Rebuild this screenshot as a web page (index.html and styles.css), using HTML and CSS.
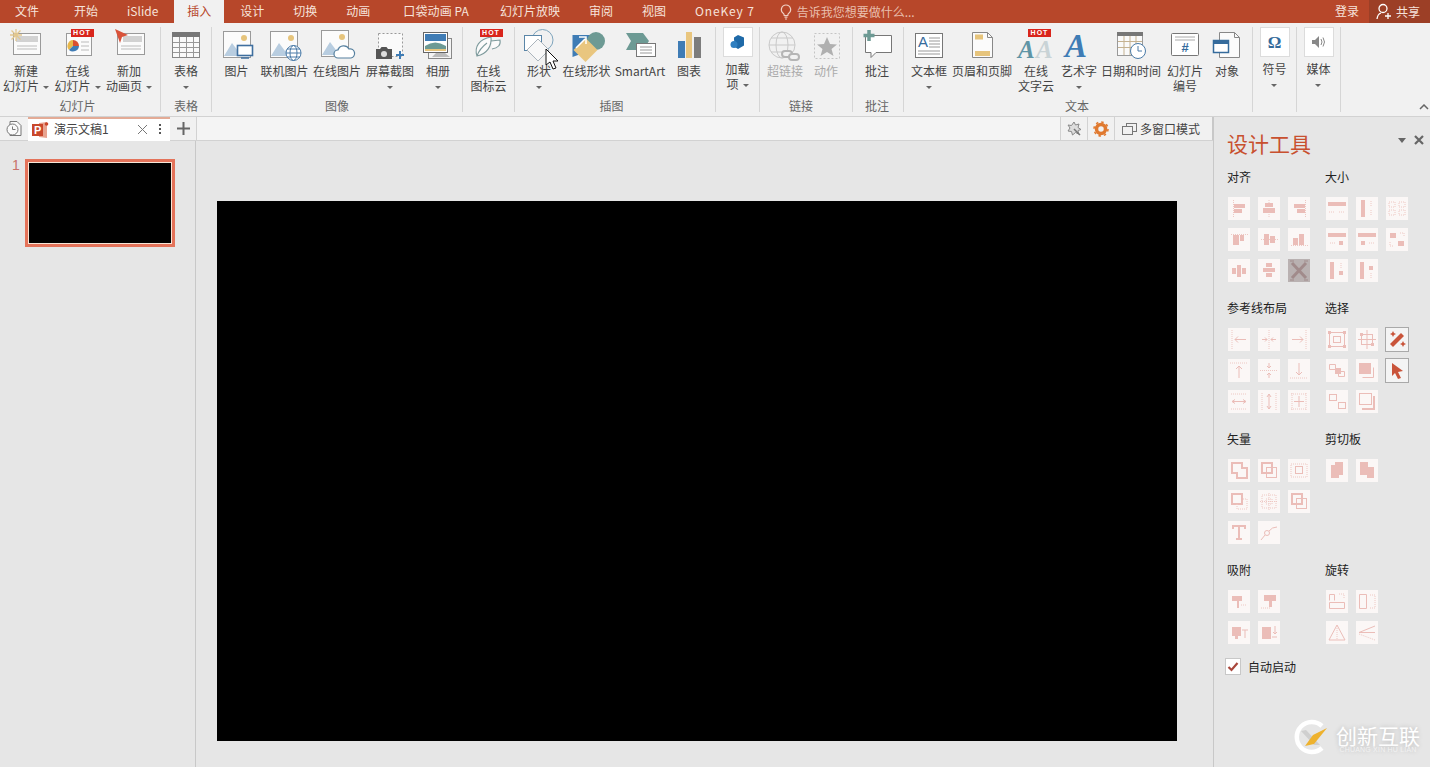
FILE: index.html
```html
<!DOCTYPE html>
<html lang="zh">
<head>
<meta charset="utf-8">
<title>演示文稿1</title>
<link rel="stylesheet" href="styles.css">
</head>
<body>
<div class="app">
  <header class="titlebar">
    <nav class="tabs">
      <span class="tab tab-first">文件</span>
      <span class="tab">开始</span>
      <span class="tab">iSlide</span>
      <span class="tab active">插入</span>
      <span class="tab">设计</span>
      <span class="tab">切换</span>
      <span class="tab">动画</span>
      <span class="tab tab-wide">口袋动画 PA</span>
      <span class="tab">幻灯片放映</span>
      <span class="tab">审阅</span>
      <span class="tab">视图</span>
      <span class="tab tab-key">OneKey 7</span>
    </nav>
    <div class="tellme">
      <svg width="12" height="16" viewBox="0 0 12 16"><path d="M6 1a4.6 4.6 0 0 0-2.6 8.4c.6.5.8 1.2.8 2.1h3.6c0-.9.2-1.6.8-2.1A4.6 4.6 0 0 0 6 1zM4.5 13.2h3M5 15h2" fill="none" stroke="#f0d0c4" stroke-width="1.2"/></svg>
      <span>告诉我您想要做什么...</span>
    </div>
    <span class="login">登录</span>
    <div class="share">
      <svg width="16" height="17" viewBox="0 0 16 17"><circle cx="7" cy="5.5" r="4" fill="none" stroke="#fff" stroke-width="1.3"/><path d="M1 16c.4-3.5 2.4-5.5 4-6M9 13h6M12 10v6" fill="none" stroke="#fff" stroke-width="1.3"/></svg>
      <span>共享</span>
    </div>
  </header>

  <section class="ribbon">
    <div class="group g-pad5">
      <div class="btns">
        <div class="btn w52"><div class="icon"><svg width="40" height="34" viewBox="0 0 40 34"><rect x="7.5" y="6.5" width="27" height="21" class="doc"/><rect x="10" y="9" width="22" height="6" fill="#d2d2d2"/><path d="M11 19h20M11 22h20" stroke="#bbb"/><g stroke="#e3c88e" stroke-width="1.3"><path d="M10 2v12M4 8h12M5.5 3.5l9 9M14.5 3.5l-9 9"/></g></svg></div><div class="label">新建<br>幻灯片<i class="caret inl"></i></div></div>
        <div class="btn w51"><div class="icon"><svg width="40" height="34" viewBox="0 0 40 34"><rect x="8.5" y="6.5" width="25" height="22" class="doc"/><path d="M15 19V13a6 6 0 0 1 6 6z" fill="#d94f30"/><path d="M15 13a6 6 0 0 0-4 10l4-4z" fill="#e8b84a"/><path d="M11 23a6 6 0 0 0 10-4h-6z" fill="#3f7cb5"/><path d="M23 15h8M23 19h8M23 23h8" stroke="#bbb"/></svg><span class="hot hot-a">HOT</span></div><div class="label">在线<br>幻灯片<i class="caret inl"></i></div></div>
        <div class="btn w52"><div class="icon"><svg width="40" height="34" viewBox="0 0 40 34"><rect x="8.5" y="6.5" width="27" height="21" class="doc"/><rect x="14" y="9" width="19" height="6" fill="#d2d2d2"/><path d="M12 19h20M12 22h20" stroke="#bbb"/><path d="M6 2l13 6-6 2-2 6z" fill="#d9533a"/></svg></div><div class="label">新加<br>动画页<i class="caret inl"></i></div></div>
      </div>
      <div class="group-name">幻灯片</div>
    </div>

    <div class="group">
      <div class="btns">
        <div class="btn w50"><div class="icon"><svg width="40" height="34" viewBox="0 0 40 34"><rect x="6.5" y="5.5" width="27" height="25" fill="#fafafa" stroke="#888"/><rect x="6" y="5" width="28" height="5" fill="#777"/><path d="M7 15.5h26M7 20.5h26M7 25.5h26M13.5 10v20M20.5 10v20M27.5 10v20" stroke="#999"/></svg></div><div class="label">表格<br><i class="caret"></i></div></div>
      </div>
      <div class="group-name">表格</div>
    </div>

    <div class="group">
      <div class="btns">
        <div class="btn w49"><div class="icon"><svg width="40" height="34" viewBox="0 0 40 34"><rect x="6.5" y="4.5" width="27" height="26" class="doc"/><path d="M7 29l8-13 6 8 3-3 6 8z" fill="#b8cde0"/><circle cx="27" cy="11" r="3" fill="#e6c47c"/><rect x="20.5" y="18.5" width="15" height="10" fill="#fff" stroke="#3f6f9f" stroke-width="1.6"/><path d="M24 31h8" stroke="#3f6f9f" stroke-width="1.5"/></svg></div><div class="label">图片</div></div>
        <div class="btn w47"><div class="icon"><svg width="40" height="34" viewBox="0 0 40 34"><rect x="5.5" y="4.5" width="27" height="26" class="doc"/><path d="M6 29l8-13 6 8 3-3 6 8z" fill="#b8cde0"/><circle cx="26" cy="11" r="3" fill="#e6c47c"/><circle cx="28.5" cy="26" r="7.5" fill="#fff" stroke="#4a7ba8"/><ellipse cx="28.5" cy="26" rx="3.5" ry="7.5" fill="none" stroke="#4a7ba8"/><path d="M21 26h15M22 22h13M22 30h13" stroke="#4a7ba8"/></svg></div><div class="label">联机图片</div></div>
        <div class="btn w58"><div class="icon"><svg width="40" height="34" viewBox="0 0 40 34"><rect x="4.5" y="3.5" width="27" height="26" class="doc"/><path d="M5 28l8-13 6 8 3-3 6 8z" fill="#b8cde0"/><circle cx="25" cy="10" r="3" fill="#e6c47c"/><path d="M21 31a4 4 0 0 1 0-8 6 6 0 0 1 11-1 4.5 4.5 0 0 1 2 9z" fill="#fff" stroke="#56809f" stroke-width="1.2"/></svg></div><div class="label">在线图片</div></div>
        <div class="btn w48"><div class="icon"><svg width="40" height="34" viewBox="0 0 40 34"><rect x="8.5" y="6.5" width="24" height="23" fill="#fafafa" stroke="#999" stroke-dasharray="2 2"/><path d="M6 22h4l1.5-2h5l1.5 2h4v10H6z" fill="#555"/><circle cx="14" cy="27" r="3" fill="#ddd"/><path d="M30 24v8M26 28h8" stroke="#3f7cb5" stroke-width="2"/></svg></div><div class="label">屏幕截图<br><i class="caret"></i></div></div>
        <div class="btn w48"><div class="icon"><svg width="40" height="34" viewBox="0 0 40 34"><rect x="10.5" y="11.5" width="23" height="20" fill="#f4f4f4" stroke="#888"/><path d="M14 30l8-8 10 8z" fill="#bbb"/><rect x="5.5" y="5.5" width="24" height="20" fill="#fff" stroke="#666"/><rect x="7" y="7" width="21" height="7" fill="#3f7cb5"/><path d="M7 19q10-7 21 0v3H7z" fill="#6d9a94"/><path d="M7 22h21v2H7z" fill="#e6c47c"/></svg></div><div class="label">相册<br><i class="caret"></i></div></div>
      </div>
      <div class="group-name">图像</div>
    </div>

    <div class="group">
      <div class="btns">
        <div class="btn w51"><div class="icon"><svg width="40" height="34" viewBox="0 0 40 34"><path d="M8 29c-3-9 2-17 14-19 1 9-4 17-14 19zM8 29c2-6 6-10 10-13M22 14l9-1c1 5-2 8-8 9" fill="#fbfbfb" stroke="#7d9a9c" stroke-width="1.1"/></svg><span class="hot hot-b">HOT</span></div><div class="label">在线<br>图标云</div></div>
      </div>
    </div>

    <div class="group g-pad7">
      <div class="btns">
        <div class="btn w48"><div class="icon"><svg width="40" height="34" viewBox="0 0 40 34"><circle cx="23.5" cy="13" r="10.5" fill="none" stroke="#7fa5bd"/><rect x="5.5" y="8.5" width="17" height="15" fill="#fff" stroke="#5a86a8"/><path d="M19 12l11 11-11 11L8 23z" fill="#f8f8f8" stroke="#aab4bc"/></svg><svg class="pointer" width="14" height="22" viewBox="0 0 14 22"><path d="M1 1v16l4-3 3 7 3-1-3-7h5z" fill="#fff" stroke="#111"/></svg></div><div class="label">形状<br><i class="caret"></i></div></div>
        <div class="btn w47"><div class="icon"><svg width="40" height="34" viewBox="0 0 40 34"><path d="M5.5 8h20v12L11 28l-5.500 2z" fill="#3f7cb5"/><circle cx="29" cy="14" r="9" fill="#6d9a94"/><path d="M18.5 11l12 12-12 12-12-12z" fill="#e9c67f"/><path d="M9 21l9-9M12 10h7v7" stroke="#fff" stroke-width="1.5" fill="none"/></svg></div><div class="label">在线形状</div></div>
        <div class="btn w60"><div class="icon"><svg width="40" height="34" viewBox="0 0 40 34"><path d="M6 6h17l6 8-6 9H6l5-9z" fill="#6d9a94"/><rect x="16.5" y="16.5" width="19" height="13" fill="#fff" stroke="#777"/><path d="M20 20h12M20 23h12M20 26h12" stroke="#999"/></svg></div><div class="label">SmartArt</div></div>
        <div class="btn w38"><div class="icon"><svg width="40" height="34" viewBox="0 0 40 34"><rect x="9" y="14" width="7" height="17" fill="#3f7cb5"/><rect x="17" y="5" width="6" height="26" fill="#e9c67f"/><rect x="25" y="10" width="7" height="21" fill="#7d7d7d"/></svg></div><div class="label">图表</div></div>
      </div>
      <div class="group-name">插图</div>
    </div>

    <div class="group">
      <div class="btns">
        <div class="btn w43"><div class="box"><svg width="18" height="16" viewBox="0 0 18 16"><path d="M9 1l6 2.5v8L9 15l-3-2V9L5 6V3.5z" fill="#1f6aa8"/><circle cx="5" cy="10.5" r="3.5" fill="#2f7fc0"/></svg></div><div class="label label-box">加载<br>项<i class="caret inl"></i></div></div>
      </div>
    </div>

    <div class="group g-pad10">
      <div class="btns">
        <div class="btn w50 off"><div class="icon"><svg width="40" height="34" viewBox="0 0 40 34"><g fill="none" stroke="#c9c9c9"><circle cx="17" cy="18" r="13"/><ellipse cx="17" cy="18" rx="6" ry="13"/><path d="M4 18h26M6 11h22M6 25h22"/></g><g fill="#f1f1f1" stroke="#b5b5b5" stroke-width="2"><rect x="17" y="24" width="10" height="6" rx="3"/><rect x="24" y="27" width="10" height="6" rx="3"/></g></svg></div><div class="label">超链接</div></div>
        <div class="btn w32 off"><div class="icon"><svg width="40" height="34" viewBox="0 0 40 34"><rect x="8.5" y="6.5" width="25" height="25" fill="none" stroke="#c4c4c4" stroke-dasharray="2 2"/><path d="M21 10l3 7 7 .5-5.500 4.500 2 7-6.500-4-6.500 4 2-7L11 17.500l7-.5z" fill="#b0b0b0"/></svg></div><div class="label">动作</div></div>
      </div>
      <div class="group-name">链接</div>
    </div>

    <div class="group g-pad2">
      <div class="btns">
        <div class="btn w48"><div class="icon"><svg width="40" height="34" viewBox="0 0 40 34"><path d="M8.5 8.5h26v17H19l-5 5v-5H8.5z" fill="#fff" stroke="#777"/><path d="M12 3v11M6.5 8.5h11" stroke="#6d9a94" stroke-width="3.5"/></svg></div><div class="label">批注</div></div>
      </div>
      <div class="group-name">批注</div>
    </div>

    <div class="group g-pad2">
      <div class="btns">
        <div class="btn w50"><div class="icon"><svg width="40" height="34" viewBox="0 0 40 34"><rect x="6.5" y="6.5" width="27" height="24" fill="#fff" stroke="#777"/><text x="9" y="20" class="svg-a">A</text><path d="M20 11h11M20 14h11M20 17h11M20 20h11M9 24h22M9 27h22" stroke="#999"/></svg></div><div class="label">文本框<br><i class="caret"></i></div></div>
        <div class="btn w56"><div class="icon"><svg width="40" height="34" viewBox="0 0 40 34"><path d="M10.5 5.5h15l5 5v20h-20z" fill="#fbfbfb" stroke="#888"/><path d="M25.5 5.5v5h5" fill="none" stroke="#888"/><rect x="13" y="7.5" width="8" height="5" fill="#e6c47c"/><rect x="13" y="24" width="15" height="5" fill="#e6c47c"/></svg></div><div class="label">页眉和页脚</div></div>
        <div class="btn w52"><div class="icon"><svg width="40" height="34" viewBox="0 0 40 34"><text x="2" y="31" class="svg-wa cloud-teal">A</text><text x="20" y="31" class="svg-wa cloud-grey">A</text></svg><span class="hot hot-c">HOT</span></div><div class="label">在线<br>文字云</div></div>
        <div class="btn w34"><div class="icon"><svg width="40" height="34" viewBox="0 0 40 34"><text x="6" y="30" class="svg-art">A</text></svg></div><div class="label">艺术字<br><i class="caret"></i></div></div>
        <div class="btn w70"><div class="icon"><svg width="40" height="34" viewBox="0 0 40 34"><rect x="6.5" y="5.5" width="25" height="23" fill="#fafafa" stroke="#999"/><rect x="6" y="5" width="26" height="4" fill="#777"/><path d="M7 14.5h24M7 20.5h24M13 9v19M19 9v19M25 9v19" stroke="#c5b291"/><circle cx="27" cy="24" r="7.5" fill="#fff" stroke="#4a7ba8"/><path d="M27 19v5h4" fill="none" stroke="#4a7ba8"/></svg></div><div class="label">日期和时间</div></div>
        <div class="btn w38"><div class="icon"><svg width="40" height="34" viewBox="0 0 40 34"><rect x="6.5" y="6.5" width="27" height="22" rx="1" fill="#fff" stroke="#777"/><path d="M10 10h20M10 13h20" stroke="#aaa"/><text x="20" y="25" class="svg-hash">#</text></svg></div><div class="label">幻灯片<br>编号</div></div>
        <div class="btn w46"><div class="icon"><svg width="40" height="34" viewBox="0 0 40 34"><path d="M12.5 5.5h15l5 5v20h-20z" fill="#fbfbfb" stroke="#888"/><path d="M27.5 5.5v5h5" fill="none" stroke="#888"/><rect x="6.5" y="13.5" width="15" height="12" fill="#fff" stroke="#356b9c" stroke-width="1.5"/><rect x="6" y="13" width="16" height="4" fill="#356b9c"/></svg></div><div class="label">对象</div></div>
      </div>
      <div class="group-name">文本</div>
    </div>

    <div class="group">
      <div class="btns">
        <div class="btn w43"><div class="box"><span class="omega">Ω</span></div><div class="label label-box">符号<br><i class="caret"></i></div></div>
      </div>
    </div>

    <div class="group">
      <div class="btns">
        <div class="btn w43"><div class="box"><svg width="14" height="12" viewBox="0 0 14 12"><path d="M0 4h3l4-4v12L3 8H0z" fill="#888"/><path d="M9 3q2 3 0 6M11 1.5q3 4.5 0 9" fill="none" stroke="#888"/></svg></div><div class="label label-box">媒体<br><i class="caret"></i></div></div>
      </div>
    </div>

    <svg class="collapse" width="10" height="6" viewBox="0 0 10 6"><path d="M1 5l4-4 4 4" fill="none" stroke="#666" stroke-width="1.5"/></svg>
  </section>

  <div class="body">
    <div class="main">
      <div class="doc-bar">
        <div class="history"><svg width="16" height="17" viewBox="0 0 16 17"><path d="M4 1.5h7l4 4v10H4z" fill="#fafafa" stroke="#777"/><circle cx="6.5" cy="9.5" r="5.5" fill="#fafafa" stroke="#777"/><path d="M6.5 6.5v3h3" fill="none" stroke="#777"/></svg></div>
        <div class="doc-tab">
          <svg width="17" height="16" viewBox="0 0 17 16"><path d="M7 1l8-1v16l-8-1z" fill="#e8a38f"/><rect x="0" y="2" width="11" height="12" fill="#c9472b"/><circle cx="14.5" cy="2" r="1.8" fill="#c9472b"/><text x="2" y="12" class="svg-p">P</text></svg>
          <span class="doc-name">演示文稿1</span>
          <svg class="doc-x" width="11" height="11" viewBox="0 0 11 11"><path d="M1 1l9 9M10 1l-9 9" stroke="#777"/></svg>
          <span class="doc-more"><i></i><i></i><i></i></span>
        </div>
        <div class="add-tab"><svg width="13" height="13" viewBox="0 0 13 13"><path d="M6.5 0v13M0 6.5h13" stroke="#666" stroke-width="2"/></svg></div>
        <div class="bar-fill"></div>
        <div class="bar-tool"><svg width="16" height="16" viewBox="0 0 16 16"><path d="M8 1l1.5 3L13 3l-1 3.5 3 2-3 1 .5 3.5-3-1.5-3 2.5-1-3.5L2 10l2-3-2-3 3.5.5z" fill="#ddd" stroke="#888"/><path d="M8 8l6 6" stroke="#777" stroke-width="1.5"/></svg></div>
        <div class="bar-tool"><svg width="16" height="16" viewBox="0 0 16 16"><circle cx="8" cy="8" r="4.5" fill="none" stroke="#e0792f" stroke-width="3.5"/><circle cx="8" cy="8" r="7" fill="none" stroke="#e0792f" stroke-width="1.5" stroke-dasharray="2.5 3"/></svg></div>
        <div class="multi">
          <svg width="15" height="12" viewBox="0 0 15 12"><rect x="4.5" y=".5" width="10" height="8" fill="#f1f1f1" stroke="#777"/><rect x=".5" y="3.5" width="10" height="8" fill="#f1f1f1" stroke="#777"/></svg>
          <span>多窗口模式</span>
        </div>
      </div>

      <div class="work">
        <aside class="thumbs">
          <span class="thumb-no">1</span>
          <div class="thumb"></div>
        </aside>
        <div class="canvas"><div class="slide"></div></div>
      </div>
    </div>

    <aside class="panel">
      <div class="panel-head">
        <h1 class="panel-title">设计工具</h1>
        <i class="panel-drop"></i>
        <svg class="panel-x" width="10" height="10" viewBox="0 0 10 10"><path d="M1 1l8 8M9 1l-8 8" stroke="#666" stroke-width="2.2"/></svg>
      </div>

      <div class="sec">
        <div class="col">
          <h2>对齐</h2>
          <div class="tiles">
            <div class="tile"><svg viewBox="0 0 22 23"><path class="d" d="M5.5 3v17"/><rect class="f" x="6" y="7" width="11" height="4"/><rect class="f" x="6" y="12" width="8" height="4"/></svg></div>
            <div class="tile"><svg viewBox="0 0 22 23"><path class="d" d="M11 3v17"/><rect class="f" x="5" y="11" width="12" height="5"/><rect class="f" x="7" y="6" width="8" height="4"/></svg></div>
            <div class="tile"><svg viewBox="0 0 22 23"><path class="d" d="M17.5 3v17"/><rect class="f" x="6" y="7" width="11" height="4"/><rect class="f" x="9" y="12" width="8" height="4"/></svg></div>
            <div class="tile"><svg viewBox="0 0 22 23"><path class="d" d="M3 6.5h17"/><rect class="f" x="5" y="7" width="6" height="10"/><rect class="f" x="12" y="7" width="4" height="6"/></svg></div>
            <div class="tile"><svg viewBox="0 0 22 23"><path class="d" d="M3 11.5h17"/><rect class="f" x="6" y="6" width="5" height="11"/><rect class="f" x="12" y="8" width="5" height="7"/></svg></div>
            <div class="tile"><svg viewBox="0 0 22 23"><path class="d" d="M3 17.5h17"/><rect class="f" x="5" y="10" width="5" height="7"/><rect class="f" x="11" y="6" width="5" height="11"/></svg></div>
            <div class="tile"><svg viewBox="0 0 22 23"><rect class="f" x="4" y="9" width="4" height="6"/><rect class="f" x="9" y="6" width="4" height="12"/><rect class="f" x="14" y="9" width="4" height="6"/></svg></div>
            <div class="tile"><svg viewBox="0 0 22 23"><rect class="f" x="8" y="4" width="6" height="4"/><rect class="f" x="5" y="9" width="12" height="4"/><rect class="f" x="8" y="14" width="6" height="4"/></svg></div>
            <div class="tile tile-grey"><svg viewBox="0 0 22 23"><path d="M4 4l14 15M18 4L4 19" stroke="#9d8585" stroke-width="3"/><path d="M2 2h4M16 2h4M2 21h4M16 21h4" stroke="#9d8585"/></svg></div>
          </div>
        </div>
        <div class="col">
          <h2>大小</h2>
          <div class="tiles">
            <div class="tile"><svg viewBox="0 0 22 23"><rect class="f" x="2" y="5" width="18" height="4"/><path class="d" d="M3 15h6M13 15h6"/></svg></div>
            <div class="tile"><svg viewBox="0 0 22 23"><rect class="f" x="5" y="3" width="4" height="17"/><path class="d" d="M15 4v6M15 13v6"/></svg></div>
            <div class="tile"><svg viewBox="0 0 22 23"><path class="d" d="M3 5h6v5H3zM13 5h6v5h-6zM3 13h6v5H3zM13 13h6v5h-6z"/></svg></div>
            <div class="tile"><svg viewBox="0 0 22 23"><rect class="f" x="2" y="5" width="18" height="4"/><path class="d" d="M4 15h5"/><rect class="f" x="13" y="13" width="4" height="4"/></svg></div>
            <div class="tile"><svg viewBox="0 0 22 23"><rect class="f" x="2" y="5" width="18" height="4"/><rect class="f" x="5" y="13" width="4" height="4"/><path class="d" d="M13 15h5"/></svg></div>
            <div class="tile"><svg viewBox="0 0 22 23"><rect class="f" x="4" y="5" width="6" height="5"/><rect class="f" x="12" y="13" width="6" height="5"/><path class="d" d="M14 5h4v4M4 14v4h4"/></svg></div>
            <div class="tile"><svg viewBox="0 0 22 23"><rect class="f" x="4" y="3" width="4" height="17"/><path class="d" d="M15 4v5"/><rect class="f" x="13" y="12" width="4" height="4"/></svg></div>
            <div class="tile"><svg viewBox="0 0 22 23"><rect class="f" x="4" y="3" width="4" height="17"/><rect class="f" x="13" y="7" width="4" height="4"/><path class="d" d="M15 14v5"/></svg></div>
          </div>
        </div>
      </div>

      <div class="sec">
        <div class="col">
          <h2>参考线布局</h2>
          <div class="tiles">
            <div class="tile"><svg viewBox="0 0 22 23"><path class="d" d="M4 2v19"/><path class="s" d="M18 11.500H7l3-3M7 11.500l3 3"/></svg></div>
            <div class="tile"><svg viewBox="0 0 22 23"><path class="d" d="M11 2v19"/><path class="s" d="M4 11.500h5l-2-2M9 11.500l-2 2M18 11.500h-5l2-2M13 11.500l2 2"/></svg></div>
            <div class="tile"><svg viewBox="0 0 22 23"><path class="d" d="M18 2v19"/><path class="s" d="M4 11.500h11l-3-3M15 11.500l-3 3"/></svg></div>
            <div class="tile"><svg viewBox="0 0 22 23"><path class="d" d="M2 4h18"/><path class="s" d="M11 19V7L8 10M11 7l3 3"/></svg></div>
            <div class="tile"><svg viewBox="0 0 22 23"><path class="d" d="M2 11.500h18"/><path class="s" d="M11 4v5L9 7M11 9l2-2M11 19v-5l-2 2M11 14l2 2"/></svg></div>
            <div class="tile"><svg viewBox="0 0 22 23"><path class="d" d="M2 19h18"/><path class="s" d="M11 4v12l-3-3M11 16l3-3"/></svg></div>
            <div class="tile"><svg viewBox="0 0 22 23"><path class="d" d="M3 4h16M3 19h16"/><path class="s" d="M4 11.500h14M7 9.500l-3 2 3 2M15 9.500l3 2-3 2"/></svg></div>
            <div class="tile"><svg viewBox="0 0 22 23"><path class="d" d="M4 3v17M18 3v17"/><path class="s" d="M11 4v15M9 7l2-3 2 3M9 16l2 3 2-3"/></svg></div>
            <div class="tile"><svg viewBox="0 0 22 23"><path class="d" d="M3 4h16M3 19h16M4 3v17M18 3v17"/><path class="s" d="M11 6v11M6 11.500h10"/></svg></div>
          </div>
        </div>
        <div class="col">
          <h2>选择</h2>
          <div class="tiles">
            <div class="tile"><svg viewBox="0 0 22 23"><rect class="s" x="3.5" y="4.5" width="15" height="14"/><rect class="s" x="7.5" y="8.5" width="7" height="6"/><rect class="f" x="2" y="3" width="3" height="3"/><rect class="f" x="17" y="3" width="3" height="3"/><rect class="f" x="2" y="17" width="3" height="3"/><rect class="f" x="17" y="17" width="3" height="3"/></svg></div>
            <div class="tile"><svg viewBox="0 0 22 23"><rect class="s" x="5.5" y="6.5" width="11" height="10"/><path class="s" d="M2 11.500h18M11 2v19"/><rect class="f" x="4" y="5" width="3" height="3"/><rect class="f" x="15" y="15" width="3" height="3"/></svg></div>
            <div class="tile tile-on"><svg viewBox="0 0 22 23"><path d="M4 16L15 5l3 3L7 19z" fill="#c9543a"/><path d="M17 13l1 2 2 1-2 1-1 2-1-2-2-1 2-1zM7 3l1 2 2 1-2 1-1 2-1-2-2-1 2-1z" fill="#c9543a"/></svg></div>
            <div class="tile"><svg viewBox="0 0 22 23"><path class="s" d="M3.500 5.500h6v5h-6zM12.500 12.500h6v5h-6z"/><rect class="f" x="9" y="9" width="6" height="6"/></svg></div>
            <div class="tile"><svg viewBox="0 0 22 23"><rect class="f" x="3" y="4" width="12" height="11"/><path class="s" d="M17.500 8.500v10h-11"/></svg></div>
            <div class="tile tile-on"><svg viewBox="0 0 22 23"><path d="M6 4l11 8-5 1 3 6-3 1-3-6-3 3z" fill="#c9543a"/></svg></div>
            <div class="tile"><svg viewBox="0 0 22 23"><rect class="s" x="3.5" y="4.5" width="7" height="6"/><rect class="s" x="12.5" y="12.5" width="7" height="6"/></svg></div>
            <div class="tile"><svg viewBox="0 0 22 23"><rect class="s" x="3.5" y="3.5" width="12" height="11"/><path class="f" d="M17 6h2v14H6v-2h11z"/></svg></div>
          </div>
        </div>
      </div>

      <div class="sec">
        <div class="col">
          <h2>矢量</h2>
          <div class="tiles">
            <div class="tile"><svg viewBox="0 0 22 23"><path class="s2" d="M4 4h10v5h5v10H9v-5H4z"/></svg></div>
            <div class="tile"><svg viewBox="0 0 22 23"><rect class="s2" x="4" y="4" width="10" height="10"/><rect class="s" x="8.5" y="8.5" width="10" height="10"/></svg></div>
            <div class="tile"><svg viewBox="0 0 22 23"><path class="d" d="M3 5h16v13H3z"/><rect class="s" x="7.5" y="7.5" width="7" height="7"/></svg></div>
            <div class="tile"><svg viewBox="0 0 22 23"><rect class="s2" x="4" y="4" width="10" height="10"/><path class="d" d="M9 14v5h10V9h-5"/></svg></div>
            <div class="tile"><svg viewBox="0 0 22 23"><path class="d" d="M4 5h14v13H4zM8 9h6v5H8zM11 3v17M2 11.500h18"/></svg></div>
            <div class="tile"><svg viewBox="0 0 22 23"><rect class="s2" x="4" y="4" width="10" height="10"/><rect class="s" x="8.5" y="8.5" width="10" height="10"/></svg></div>
            <div class="tile"><svg viewBox="0 0 22 23"><path class="f" d="M4 4h14v4h-2V6h-4v11h2v2H8v-2h2V6H6v2H4z"/></svg></div>
            <div class="tile"><svg viewBox="0 0 22 23"><circle class="s" cx="9" cy="12" r="2.5"/><path class="s" d="M11 10q3-4 8-4M7 14l-4 5"/></svg></div>
          </div>
        </div>
        <div class="col">
          <h2>剪切板</h2>
          <div class="tiles">
            <div class="tile"><svg viewBox="0 0 22 23"><rect class="f" x="5" y="6" width="8" height="13"/><rect class="f" x="9" y="3" width="8" height="13"/></svg></div>
            <div class="tile"><svg viewBox="0 0 22 23"><rect class="f" x="4" y="3" width="8" height="13"/><rect class="f" x="11" y="8" width="7" height="11"/></svg></div>
          </div>
        </div>
      </div>

      <div class="sec">
        <div class="col">
          <h2>吸附</h2>
          <div class="tiles">
            <div class="tile"><svg viewBox="0 0 22 23"><path class="f" d="M4 6h10v5h-3v7H9v-7H4z"/><path class="d" d="M13 15h6"/></svg></div>
            <div class="tile"><svg viewBox="0 0 22 23"><path class="f" d="M6 5h12v6h-4v6h-3v-6H6z"/><path class="d" d="M3 18h9"/></svg></div>
            <div class="tile tile-break"><svg viewBox="0 0 22 23"><path class="f" d="M4 6h9v9h-3v3H7v-3H4z"/><path class="s" d="M14 9h6M17 9v8"/></svg></div>
            <div class="tile"><svg viewBox="0 0 22 23"><path class="f" d="M4 6h9v12H4z"/><path class="s" d="M17 5v8l-2-2M17 13l2-2M14 16h5"/></svg></div>
          </div>
        </div>
        <div class="col">
          <h2>旋转</h2>
          <div class="tiles">
            <div class="tile"><svg viewBox="0 0 22 23"><path class="s" d="M3.500 12.500h15v6h-15zM3.500 10.500v-6h5v6"/><path class="d" d="M13 4h5v5"/></svg></div>
            <div class="tile"><svg viewBox="0 0 22 23"><path class="s" d="M3.500 4.500h7v14h-7z"/><path class="d" d="M14 5h5v13h-5"/></svg></div>
            <div class="tile tile-break"><svg viewBox="0 0 22 23"><path class="s" d="M11 4L3 19h16z"/><path class="d" d="M11 5v14"/></svg></div>
            <div class="tile"><svg viewBox="0 0 22 23"><path class="s" d="M19 5L3 11.500h16"/><path class="d" d="M3 13l16 6"/></svg></div>
          </div>
        </div>
      </div>

      <label class="auto">
        <span class="check"><svg width="12" height="10" viewBox="0 0 12 10"><path d="M1.500 5l3 3 6-7" fill="none" stroke="#a9473c" stroke-width="2.200"/></svg></span>
        <span>自动启动</span>
      </label>
    </aside>
  </div>

  <div class="watermark">
    <svg width="36" height="36" viewBox="0 0 36 36"><path d="M28 7a15 15 0 1 0 0 22" fill="none" stroke="#fff" stroke-width="4.500"/><path d="M12 11l14 15h-6L7 12z" fill="#cfcfcf"/><path d="M33 9L20 25l-9 2 8-11z" fill="#eeb22e"/></svg>
    <div class="wm-text"><span class="wm-cn">创新互联</span><span class="wm-en">CHUANG XIN HU LIAN</span></div>
  </div>
</div>
</body>
</html>
```

FILE: styles.css
```css
* { box-sizing: border-box; }
html, body { margin: 0; padding: 0; }
body {
  width: 1430px;
  height: 767px;
  overflow: hidden;
  background: #e6e6e6;
  color: #444;
  font: 12px/15px "Noto Sans CJK SC", "Liberation Sans", sans-serif;
}
.app { position: relative; width: 1430px; height: 767px; display: flex; flex-direction: column; }
i { font-style: normal; }
svg { display: block; }

/* title bar */
.titlebar { height: 23px; flex: none; display: flex; align-items: stretch; background: #b7472a; color: #f6e3db; }
.tabs { display: flex; gap: 3px; }
.tab { padding: 0 13px; line-height: 21px; white-space: nowrap; }
.tab-first { padding: 0 19px 0 15px; }
.tab-wide { margin-left: 4px; padding-right: 15px; letter-spacing: .1px; }
.tab-key { letter-spacing: .85px; }
.tab.active { background: #f1f1f1; color: #b7472a; }
.tellme { display: flex; align-items: center; gap: 5px; margin-left: 12px; color: #e9bfae; }
.login { margin-left: auto; padding-right: 10px; line-height: 21px; color: #f6e3db; }
.share { width: 61px; display: flex; align-items: center; gap: 4px; padding-left: 7px; background: #9c3f26; color: #f6e3db; }

/* ribbon */
.ribbon { height: 94px; flex: none; display: flex; align-items: flex-start; padding-top: 4px; background: #f1f1f1; border-bottom: 1px solid #d2d2d2; }
.group { height: 85px; display: flex; flex-direction: column; border-right: 1px solid #d6d6d6; }
.g-pad2 { padding-right: 2px; }
.g-pad5 { padding-right: 5px; }
.g-pad7 { padding-right: 7px; }
.g-pad10 { padding-right: 10px; }
.btns { flex: 1; display: flex; min-height: 0; }
.btn { flex: none; display: flex; flex-direction: column; align-items: center; text-align: center; white-space: nowrap; }
.w32 { width: 32px; } .w34 { width: 34px; } .w38 { width: 38px; } .w43 { width: 43px; }
.w46 { width: 46px; } .w47 { width: 47px; } .w48 { width: 48px; } .w49 { width: 49px; }
.w50 { width: 50px; } .w51 { width: 51px; } .w52 { width: 52px; } .w56 { width: 56px; }
.w58 { width: 58px; } .w60 { width: 60px; } .w70 { width: 70px; }
.icon { position: relative; height: 36px; width: 40px; flex: none; }
.icon svg { overflow: visible; }
.box { width: 30px; height: 30px; flex: none; display: flex; align-items: center; justify-content: center; background: #fff; border: 1px solid #dcdcdc; }
.label { color: #444; }
.label-box { margin-top: 4px; }
.off .label { color: #aaa; }
.group-name { height: 15px; flex: none; margin-bottom: -1px; text-align: center; color: #666; }
.caret { display: inline-block; width: 0; height: 0; border: 3px solid transparent; border-top: 3px solid #666; border-bottom: 0; vertical-align: 2px; }
.caret.inl { margin-left: 4px; }
.collapse { margin: 77px 1px 0 auto; }
.omega { font: bold 17px/1 "Liberation Serif", serif; color: #356b9c; }
.hot { position: absolute; top: 2px; height: 8px; background: #d9251c; color: #fff; font: bold 7px/8px "Liberation Sans", sans-serif; letter-spacing: 1px; text-align: center; width: 23px; }
.hot-a { left: 13px; }
.hot-b { left: 11px; }
.hot-c { left: 12px; }
.pointer { position: absolute; left: 26px; top: 21px; }
.doc { fill: #fbfbfb; stroke: #9a9a9a; }
.svg-a { font: 15px "Liberation Sans", sans-serif; fill: #356b9c; }
.svg-wa { font: bold italic 25px "Liberation Serif", serif; }
.cloud-teal { fill: #5f95a6; }
.cloud-grey { fill: #c9d3d6; }
.svg-art { font: bold italic 33px "Liberation Serif", serif; fill: #3f7cb5; }
.svg-hash { font: bold 13px "Liberation Sans", sans-serif; fill: #356b9c; text-anchor: middle; }
.svg-p { font: bold 11px "Liberation Sans", sans-serif; fill: #fff; }

/* lower area */
.body { flex: 1; min-height: 0; display: flex; }
.main { width: 1213px; flex: none; display: flex; flex-direction: column; }
.doc-bar { height: 24px; flex: none; display: flex; align-items: stretch; background: #f1f1f1; border-bottom: 1px solid #d2d2d2; }
.history { width: 28px; display: flex; align-items: center; justify-content: center; }
.doc-tab { width: 142px; height: 24px; display: flex; align-items: center; background: #fff; border-top: 2px solid #e3ab96; padding-left: 4px; }
.doc-name { margin: -3px 0 0 5px; color: #444; }
.doc-x { margin-left: 28px; margin-top: -2px; }
.doc-more { margin: -2px 0 0 11px; display: flex; flex-direction: column; gap: 2px; }
.doc-more i { width: 2px; height: 2px; background: #555; }
.add-tab { width: 27px; display: flex; align-items: center; justify-content: center; border-right: 1px solid #d2d2d2; }
.bar-fill { flex: 1; background: #f4f4f4; }
.bar-tool { width: 27px; display: flex; align-items: center; justify-content: center; border-left: 1px solid #d2d2d2; }
.multi { width: 99px; display: flex; align-items: center; gap: 3px; padding-left: 7px; border-left: 1px solid #d2d2d2; border-right: 1px solid #c8c8c8; color: #444; }
.work { flex: 1; min-height: 0; display: flex; }
.thumbs { width: 196px; flex: none; display: flex; align-items: flex-start; padding: 18px 0 0 12px; border-right: 1px solid #c8c8c8; }
.thumb-no { width: 13px; margin-top: -1px; font: 14px/15px "Liberation Sans", sans-serif; color: #c9726a; }
.thumb { width: 150px; height: 88px; background: #000; border: 3px solid #e4735a; outline: 1px solid #f7e6d8; outline-offset: -4px; }
.canvas { flex: 1; padding: 60px 0 0 21px; }
.slide { width: 960px; height: 540px; background: #000; }

/* design panel */
.panel { flex: 1; min-width: 0; padding-left: 13px; border-left: 1px solid #c8c8c8; background: #e6e6e6; }
.panel-head { height: 52px; display: flex; align-items: flex-start; padding-top: 10px; }
.panel-title { margin: 0; white-space: nowrap; font: 400 21px/32px "Noto Sans CJK SC", sans-serif; color: #c8502f; }
.panel-drop { margin: 11px 0 0 87px; width: 0; height: 0; border: 4px solid transparent; border-top: 5px solid #666; border-bottom: 0; }
.panel-x { margin: 8px 0 0 8px; }
.sec { display: flex; margin-bottom: 18px; }
.col { width: 98px; flex: none; }
.col h2 { margin: 0 0 12px; font: 400 12px/16px "Noto Sans CJK SC", sans-serif; color: #222; }
.tiles { display: grid; grid-template-columns: repeat(3, 22px); grid-auto-rows: 23px; gap: 8px; padding-left: 1px; }
.tile { background: #fbf7f6; }
.tile svg { width: 22px; height: 23px; opacity: .85; }
.tile-break { grid-column-start: 1; }
.tile-grey { background: #b9b1b1; }
.tile-on { background: #f4f4f4; outline: 1px solid #a9a9a9; }
.tile-on svg { opacity: 1; }
.f { fill: #e9b4ae; }
.s { fill: none; stroke: #e9b4ae; }
.s2 { fill: none; stroke: #e9b4ae; stroke-width: 2; }
.d { fill: none; stroke: #ecc0bb; stroke-dasharray: 1 1; }
.auto { display: flex; align-items: center; gap: 7px; margin: -4px 0 0 -2px; color: #222; }
.check { width: 16px; height: 17px; display: flex; align-items: center; justify-content: center; background: #fff; border: 1px solid #c8c8c8; }

/* watermark */
.watermark { position: absolute; left: 1294px; top: 719px; display: flex; gap: 6px; align-items: center; }
.wm-text { display: flex; flex-direction: column; align-items: center; padding-top: 3px; color: #fff; text-shadow: 0 0 5px rgba(0,0,0,.2); }
.wm-cn { font: 21px/22px "Noto Sans CJK SC", sans-serif; }
.wm-en { font: 7px/8px "Liberation Sans", sans-serif; color: #f2f2f2; letter-spacing: .2px; white-space: nowrap; }
```
